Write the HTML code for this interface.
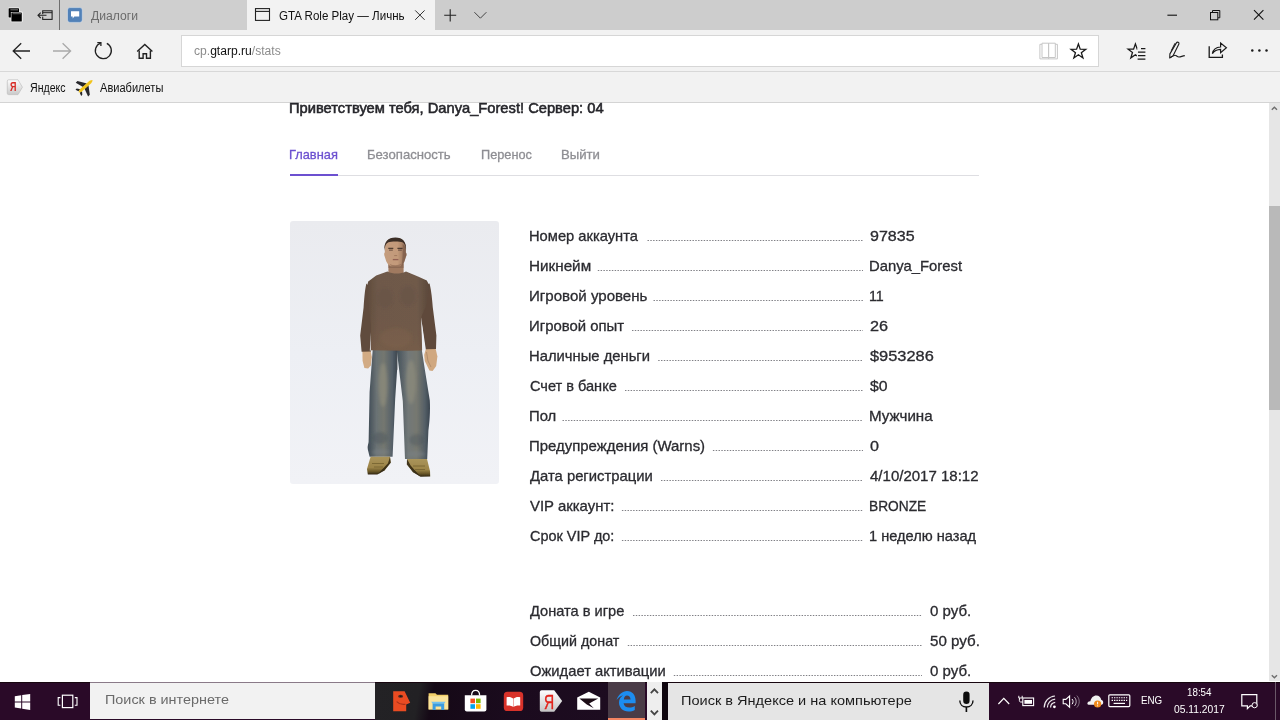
<!DOCTYPE html>
<html lang="ru">
<head>
<meta charset="utf-8">
<title>GTA Role Play — Личный кабинет</title>
<style>
*{box-sizing:border-box;margin:0;padding:0}
html,body{width:1280px;height:720px;overflow:hidden;background:#fff}
body{position:relative;font-family:"Liberation Sans",sans-serif;color:#222}
.abs{position:absolute}
.t{position:absolute;white-space:nowrap;line-height:1;transform-origin:0 0}
svg.ov{position:absolute;left:0;top:0;width:1280px;height:720px;overflow:visible}
/* browser chrome */
#tabbar{left:0;top:0;width:1280px;height:30px;background:#cdcdcd}
#tabsep{left:59px;top:0;width:1px;height:30px;background:#6e6e6e}
#tab1{left:60px;top:0;width:187px;height:30px;background:#cfcfcf}
#tab2{left:247px;top:0;width:188px;height:30px;background:#f2f2f2}
#navbar{left:0;top:30px;width:1280px;height:41px;background:#f2f2f2}
#addr{left:181px;top:35px;width:918px;height:32px;background:#fff;border:1px solid #d6d6d6}
#favbar{left:0;top:71px;width:1280px;height:32px;background:#f2f2f2;border-top:1px solid #d8d8d8;border-bottom:1px solid #d4d4d4}
/* page */
#page{left:0;top:103px;width:1268px;height:579px;background:#fff;overflow:hidden}
#tabsline{left:290px;top:175px;width:689px;height:1px;background:#dedee2}
#tabsact{left:290px;top:174px;width:48px;height:2px;background:#6c50d0}
#skin{left:290px;top:221px;width:209px;height:262.5px;border-radius:3px;background:linear-gradient(180deg,#eaebef 0%,#edeff4 50%,#f1f2f6 100%)}
#scroll{left:1269px;top:103px;width:11px;height:578px;background:#e6e6e6}
#thumb{left:1269px;top:206px;width:11px;height:204px;background:#b9b9b9}
.dots{position:absolute;height:1px;background-image:repeating-linear-gradient(90deg,#88888c 0,#88888c 1.4px,transparent 1.4px,transparent 2.81px)}
/* taskbar */
#taskbar{left:0;top:682px;width:1280px;height:38px;background:#2a0a28;border-top:1px solid #17060f}
#tbmid{left:375px;top:683px;width:233px;height:37px;background:linear-gradient(100deg,#232225 0,#222124 19%,#150916 25%,#1b0b1e 60%,#1d0c20 100%)}
#search1{left:90px;top:682px;width:285px;height:37px;background:#f2f2f2;border-top:1px solid #8a7a88}
#edgebg{left:608px;top:682px;width:37px;height:38px;background:#4a3c47}
#edgeline{left:608px;top:717.5px;width:36.5px;height:2.5px;background:#f48562}
#updn{left:647px;top:682px;width:15px;height:38px;background:#eeeeee}
#gap2{left:662px;top:682px;width:6px;height:38px;background:#0f060f}
#search2{left:668px;top:683px;width:321px;height:37px;background:#e5e5e5}
</style>
</head>
<body>
<div id="tabbar" class="abs"></div>
<div id="tab1" class="abs"></div>
<div id="tabsep" class="abs"></div>
<div id="tab2" class="abs"></div>
<div id="navbar" class="abs"></div>
<div id="addr" class="abs"></div>
<div id="favbar" class="abs"></div>
<div id="page" class="abs"></div>
<div id="tabsline" class="abs"></div>
<div id="tabsact" class="abs"></div>
<div id="skin" class="abs"></div>
<div id="scroll" class="abs"></div>
<div id="thumb" class="abs"></div>
<div id="taskbar" class="abs"></div>
<div id="tbmid" class="abs"></div>
<div id="search1" class="abs"></div>
<div id="edgebg" class="abs"></div>
<div id="edgeline" class="abs"></div>
<div id="updn" class="abs"></div>
<div id="gap2" class="abs"></div>
<div id="search2" class="abs"></div>
<svg class="ov" viewBox="0 0 1280 720" fill="none" stroke-linecap="butt">
<!-- tab preview icon -->
<rect x="8" y="7.6" width="11.6" height="10.6" rx="1" fill="#fff" opacity=".75"/>
<rect x="10.6" y="11.4" width="12" height="10.8" rx="1" fill="#fff" opacity=".75"/>
<rect x="8.6" y="8.2" width="10.4" height="9.4" rx=".6" fill="#000"/>
<rect x="10.4" y="9.3" width="7.6" height="1" fill="#777"/>
<rect x="10.9" y="11.9" width="11.3" height="9.8" rx=".6" fill="#fff"/>
<rect x="11.4" y="12.4" width="10.4" height="9" rx=".5" fill="#000"/>
<rect x="12.6" y="13.2" width="8.4" height="1" fill="#666"/>
<!-- set aside icon -->
<rect x="42.7" y="10.8" width="9.4" height="8.6" stroke="#222" stroke-width="1.1"/>
<line x1="42.7" y1="12.7" x2="52.1" y2="12.7" stroke="#222" stroke-width="1"/>
<rect x="41.5" y="14.2" width="3" height="2.4" fill="#cdcdcd"/>
<path d="M46.5 15.3H38M40.7 12.6L38 15.3L40.7 18" stroke="#222" stroke-width="1.1"/>
<!-- vk icon -->
<rect x="67.5" y="7.6" width="14.8" height="14.8" rx="2.4" fill="#5181b8"/>
<rect x="67.5" y="7.6" width="14.8" height="14.8" rx="2.4" stroke="#dfe6ee" stroke-width=".8" opacity=".7"/>
<path d="M71 11.2h8.2v5.3h-4.9l-1.6 1.9v-1.9H71z" fill="#fff"/>
<!-- active tab page icon -->
<rect x="255.5" y="8.6" width="14" height="11.8" stroke="#222" stroke-width="1.1"/>
<line x1="255.5" y1="11.4" x2="269.5" y2="11.4" stroke="#222" stroke-width="1.1"/>
<!-- tab close -->
<path d="M415.2 10.4l9.4 9.4M424.6 10.4l-9.4 9.4" stroke="#333" stroke-width="1"/>
<!-- new tab plus, chevron -->
<path d="M444.2 15.3h12M450.2 9.2v12.4" stroke="#222" stroke-width="1.1"/>
<path d="M474.4 12.2l6 6 6-6" stroke="#444" stroke-width="1"/>
<!-- window controls -->
<path d="M1167.4 15.2h9.6" stroke="#111" stroke-width="1.1"/>
<path d="M1212.500 12V10.500h7.300v7.300h-1.800" stroke="#111" stroke-width="1"/>
<rect x="1210.500" y="12.500" width="7.300" height="7.300" stroke="#111" stroke-width="1"/>
<path d="M1254 10.2l9.4 9.5M1263.4 10.2l-9.4 9.5" stroke="#111" stroke-width="1.1"/>
<!-- back -->
<path d="M30 51H13.4M21.2 43.2L13.2 51l8 7.8" stroke="#222" stroke-width="1.3"/>
<!-- forward -->
<path d="M53 51h17M62.6 43.2l8 7.8-8 7.8" stroke="#a9a9a9" stroke-width="1.3"/>
<!-- refresh -->
<path d="M100.6 43.1A8 8 0 1 0 106.8 43.4" stroke="#222" stroke-width="1.3"/>
<path d="M97.3 42.6h3.6v3.5" stroke="#222" stroke-width="1.3"/>
<!-- home -->
<path d="M137.2 51.6l7.6-7.2 7.6 7.2" stroke="#222" stroke-width="1.4"/>
<path d="M139.2 50.4v7.9h3.9v-4.6h3.4v4.6h3.9v-7.9" stroke="#222" stroke-width="1.4"/>
<!-- reading view book -->
<path d="M1042 44.300h-2.100v14.600h17.500V44.300h-2.100" stroke="#c6c6c6" stroke-width="1"/>
<path d="M1042 43.200h6.600v14.300H1042zM1048.600 43.200h6.700v14.300h-6.700z" stroke="#c6c6c6" stroke-width="1"/>
<path d="M1048.600 57.500v1.400" stroke="#c6c6c6" stroke-width="1"/>
<!-- star -->
<path d="M1078.40 44.00L1080.21 49.21L1085.72 49.32L1081.33 52.65L1082.93 57.93L1078.40 54.78L1073.87 57.93L1075.47 52.65L1071.08 49.32L1076.59 49.21z" stroke="#1a1a1a" stroke-width="1.300" stroke-linejoin="miter"/>
<!-- hub: star + lines -->
<path d="M1135.40 43.90L1137.21 49.11L1142.72 49.22L1138.33 52.55L1139.93 57.83L1135.40 54.68L1130.87 57.83L1132.47 52.55L1128.08 49.22L1133.59 49.11z" stroke="#1a1a1a" stroke-width="1.300" stroke-linejoin="miter"/>
<path d="M1137.400 47.700h9v12.800h-9.800z" fill="#f2f2f2"/>
<path d="M1141 48.700h4.400M1138 52.200h7.400M1138 55.700h7.400M1137.600 59.100h7.800" stroke="#1a1a1a" stroke-width="1.200"/>
<!-- pen / notes -->
<path d="M1176.400 42.900c.9-1.500 3.100-.5 2.500 1.200l-5.700 11.500-3.500 2.400.2-4.100z" stroke="#1a1a1a" stroke-width="1.100" stroke-linejoin="round"/>
<path d="M1175 43.200l-3.700 7.400" stroke="#1a1a1a" stroke-width="1"/>
<path d="M1170.400 57.600c2.400-1.600 3.600-2.600 4.800-2.400 1.400.2 1.800 1.800 3.800 1.800 1.800 0 3.200-1 5.800-1.400" stroke="#1a1a1a" stroke-width="1.100"/>
<!-- share -->
<path d="M1209.200 46.200v11.100h13.200v-2.800" stroke="#1a1a1a" stroke-width="1.300"/>
<path d="M1212.400 53.600c.8-4.400 3.600-6.400 8.200-6.600v-4l5.800 4.800-5.800 4.800v-3.200c-3.800.2-6.200 1.400-8.200 4.200z" stroke="#1a1a1a" stroke-width="1.200" stroke-linejoin="miter"/>
<!-- more dots -->
<circle cx="1252.300" cy="50.500" r="1.250" fill="#1a1a1a"/><circle cx="1259.400" cy="50.500" r="1.250" fill="#1a1a1a"/><circle cx="1266.500" cy="50.500" r="1.250" fill="#1a1a1a"/>
<!-- fav: yandex -->
<defs><linearGradient id="yg" x1="0" y1="0" x2="0" y2="1"><stop offset="0" stop-color="#fdfdfd"/><stop offset="1" stop-color="#c9c9c9"/></linearGradient>
<linearGradient id="yr" x1="0" y1="0" x2="0" y2="1"><stop offset="0" stop-color="#ee6a5e"/><stop offset="1" stop-color="#d01c1c"/></linearGradient></defs>
<path d="M8.600 79.800h9.400l4.400 7.400-4.400 7.400H8.600a1.300 1.300 0 0 1-1.300-1.300V81.100a1.300 1.300 0 0 1 1.300-1.300z" fill="url(#yg)" stroke="#bdbdbd" stroke-width=".7"/>
<!-- fav: plane -->
<g transform="translate(85.5 86.3) rotate(48) scale(1.05)">
<path d="M1.1-2.800L8.800 2.400v2.200L1.100 2.200zM-1.100-2.800L-8.800 2.400v2.200L-1.100 2.200z" fill="#26262a"/>
<path d="M1 5.400l3 2.300v1.500l-3-1zM-1 5.400l-3 2.300v1.500l3-1z" fill="#26262a"/>
<path d="M0-9c1.200 1.200 1.400 2.600 1.400 4v11.600L0 8.800l-1.400-2.200V-5c0-1.400.2-2.800 1.400-4z" fill="#f2c41c"/>
</g>
<!-- scrollbar arrows -->
<path d="M1271.800 109.800l2.600-2.600 2.600 2.600" stroke="#6e6e6e" stroke-width="1.400"/>
<path d="M1271.800 675.200l2.600 2.600 2.600-2.600" stroke="#6e6e6e" stroke-width="1.400"/>
</svg>
<div class="t" style="left:10.4px;top:81.2px;font-size:12.5px;font-weight:700;color:#d82a24;transform:scaleX(.72)">Я</div>

<svg class="ov" viewBox="0 0 1280 720">
<defs>
<filter id="cb" x="-5%" y="-5%" width="110%" height="110%"><feGaussianBlur stdDeviation="0.55"/></filter>
<filter id="cb2" x="-20%" y="-20%" width="140%" height="140%"><feGaussianBlur stdDeviation="1.6"/></filter>
<linearGradient id="sw" x1="0" y1="0" x2="1" y2="0"><stop offset="0" stop-color="#5f4b3c"/><stop offset=".18" stop-color="#6e5949"/><stop offset=".8" stop-color="#6f5a4a"/><stop offset="1" stop-color="#5a4739"/></linearGradient>
<linearGradient id="swv" x1="0" y1="0" x2="0" y2="1"><stop offset="0" stop-color="#6a5445" stop-opacity="0"/><stop offset="1" stop-color="#7a5e48" stop-opacity=".55"/></linearGradient>
<linearGradient id="jl" x1="0" y1="0" x2="1" y2="0"><stop offset="0" stop-color="#3e4a54"/><stop offset=".3" stop-color="#6a7274"/><stop offset=".55" stop-color="#74776f"/><stop offset=".82" stop-color="#57616a"/><stop offset="1" stop-color="#3b4650"/></linearGradient>
<linearGradient id="jr" x1="0" y1="0" x2="1" y2="0"><stop offset="0" stop-color="#43505a"/><stop offset=".35" stop-color="#727878"/><stop offset=".6" stop-color="#767870"/><stop offset=".85" stop-color="#545e66"/><stop offset="1" stop-color="#39444e"/></linearGradient>
<linearGradient id="sk" x1="0" y1="0" x2="1" y2="0"><stop offset="0" stop-color="#c49c7c"/><stop offset=".6" stop-color="#c39a7a"/><stop offset="1" stop-color="#8f6c55"/></linearGradient>
<linearGradient id="sh" x1="0" y1="0" x2="0" y2="1"><stop offset="0" stop-color="#aa945a"/><stop offset=".6" stop-color="#9c8448"/><stop offset=".82" stop-color="#6a5828"/><stop offset="1" stop-color="#2e2410"/></linearGradient>
</defs>
<g filter="url(#cb)">
<!-- neck -->
<path d="M388.400 258h15.200v17h-15.200z" fill="#a07a60"/>
<path d="M388.400 264h15.200v4h-15.200z" fill="#7e5e4a" opacity=".6"/>
<!-- head -->
<path d="M384.800 247c0-6 4.200-9 10.600-9s10.400 3 10.400 9v5.500c.8.200 1 2.800.1 4l-.8 2.500c-.6 3.200-3 6.200-5 7.300h-9.600c-2.400-1.300-4.400-4.300-5-7.300l-.8-2.500c-.9-1.600-.5-3.800.1-4z" fill="url(#sk)"/>
<path d="M402.600 244c2 1 3.200 3 3.200 6v3c.8.200 1 2.800.1 4l-.8 2.500c-.5 2.600-2 5-3.700 6.400 1-5 1.600-14 1.200-21.900z" fill="#7c5b48" opacity=".7"/>
<!-- hair -->
<path d="M384.400 251c-.8-9 3.800-13.400 11-13.400s11.400 4.400 10.600 13.400c-.3-5.600-1.800-8-3.600-8.800-2.200-.9-11.800-.9-14 0-2 .8-3.600 3.200-4 8.800z" fill="#3a2d26"/>
<!-- face details -->
<path d="M388.300 248.300h5M397.400 248.300h5.200" stroke="#3f2f27" stroke-width="1.200" opacity=".85"/>
<path d="M389 250.200h3.800M398 250.200h3.800" stroke="#5a4034" stroke-width="1.200" opacity=".7"/>
<path d="M392.800 259.600h5.600" stroke="#8a584c" stroke-width="1.300" opacity=".85"/>
<path d="M394.200 255.600h3" stroke="#9a7258" stroke-width="1" opacity=".8"/>
<path d="M390 264.600c2 1.600 9 1.600 11.200 0" stroke="#8e6a54" stroke-width="1.200" fill="none" opacity=".7"/>
<!-- jeans -->
<path d="M372.800 348.500h24.400v20l-2 30-2.600 58.200h-23l-1.800-7.400c-.6-3 .6-5.200.8-7.200l1-50z" fill="url(#jl)"/>
<path d="M396.600 348.500h25l3.400 22 4.800 30c.6 10-.2 22-1.400 30l-1.200 28.400h-22.200l-2.200-58z" fill="url(#jr)"/>
<path d="M396.800 352v18" stroke="#4a5054" stroke-width="1.200" opacity=".7"/>
<!-- shoes -->
<path d="M370.600 456.800h19.400l.6 5.800-6 7.600-7.400 4.400h-9.400l-.8-5.600z" fill="url(#sh)"/>
<path d="M390 456.800l.8 6-6.400 7.600-7 4.200 10.600-11.400z" fill="#2e2410" opacity=".85"/>
<path d="M407.200 459h19.800l3 12 .2 5.600-9.600.2-7.600-4.800-6-8z" fill="url(#sh)"/>
<path d="M407 459l-.2 5.400 6.200 7.800 7.400 4.400-9.800-11z" fill="#2e2410" opacity=".85"/>
<path d="M372 463.500h12M374 467h9M413 466h12M415 469.500h10" stroke="#6e5c2c" stroke-width=".9" opacity=".8"/>
<!-- hands -->
<path d="M362.400 351h8.200l1.200 6-1 8.600-2.600 2.800-3.800-.4-1.800-7z" fill="#d2ab84"/>
<path d="M426 348.500h9.600l1.800 8-1.200 9.600-3.600 5-3.200-.6-4.600-9.500-.6-6z" fill="#d0a880"/>
<path d="M426.500 352l1.500 9 3 6" stroke="#a58262" stroke-width="1" fill="none" opacity=".7"/>
<!-- sweater arms -->
<path d="M366.400 283.600c-1.600 6-2.200 16-2.800 24l-3.400 28 1.400 16.200 9.400-.2 1.600-24 6-30z" fill="#604b3c"/>
<path d="M429.600 283.600c1.800 7 2.600 17 3.200 24l3.600 28-.4 13.400-10.200.2-4.600-31-6-30z" fill="#5f4a3b"/>
<!-- sweater torso -->
<path d="M387.400 271.400c3 1.600 6 2 9.200 2s6.400-.4 9.400-2l12 5 8.800 4 3 6-4 20-4.800 11 1.200 32.800-15.200.6-36.200-.8.400-22-4.600-40 1.600-6.400 8-6z" fill="url(#sw)"/>
<path d="M371 300h51v50.500h-51z" fill="url(#swv)"/>
<path d="M421.400 320l3.600 29.600-2.400.4z" fill="#edeff4"/>
<path d="M370.800 332l.2 18.500-1.200.2z" fill="#edeff4" opacity=".8"/>
<g filter="url(#cb2)">
<ellipse cx="385" cy="298" rx="8" ry="10" fill="#58443a" opacity=".2"/>
<ellipse cx="408" cy="296" rx="8" ry="10" fill="#58443a" opacity=".2"/>
<ellipse cx="396" cy="338" rx="16" ry="10" fill="#80644e" opacity=".35"/>
<ellipse cx="383" cy="385" rx="4.500" ry="22" fill="#97947f" opacity=".55"/>
<ellipse cx="411" cy="382" rx="5" ry="22" fill="#97947f" opacity=".5"/>
<ellipse cx="380" cy="438" rx="8" ry="6" fill="#4a545c" opacity=".45"/>
<ellipse cx="417" cy="440" rx="8" ry="6" fill="#4a545c" opacity=".4"/>
<ellipse cx="381" cy="452" rx="9" ry="3" fill="#7a8288" opacity=".5"/>
<ellipse cx="416" cy="454" rx="9" ry="3" fill="#7a8288" opacity=".5"/>
</g>
</g>
</svg>

<svg class="ov" viewBox="0 0 1280 720" fill="none">
<defs>
<filter id="tb" x="-10%" y="-10%" width="120%" height="120%"><feGaussianBlur stdDeviation="0.35"/></filter>
<linearGradient id="yg2" x1="0" y1="0" x2="0" y2="1"><stop offset="0" stop-color="#ffffff"/><stop offset="1" stop-color="#c4c4c4"/></linearGradient>
</defs>
<g filter="url(#tb)">
<!-- windows logo -->
<path d="M14.800 696.200l6.400-.9v6.100h-6.400zM22.200 695.100l8-1.200v7.500h-8zM14.800 702.400h6.400v6.100l-6.400-.9zM22.200 702.400h8v7.500l-8-1.200z" fill="#fff"/>
<!-- task view -->
<rect x="62.400" y="695.200" width="10.400" height="12.400" stroke="#fff" stroke-width="1.200"/>
<path d="M60.400 697.600h-2.200v7.600h2.200M74.800 697.600h2.200v7.600h-2.200" stroke="#fff" stroke-width="1.100"/>
<!-- orange face -->
<path d="M393.200 691.200h11.400l5.600 11.600-4 1.600v6.800h-13z" fill="#ea4c24"/>
<ellipse cx="400.600" cy="696.200" rx="2.500" ry="1.500" fill="#4a2a22"/>
<circle cx="400.800" cy="696.200" r=".7" fill="#1a0a08"/>
<path d="M396.600 701.600c2.400 2.400 5.400 3.200 9 2.600" stroke="#a8321a" stroke-width="1.100"/>
<!-- folder -->
<path d="M428.600 693.200h6.800l1.600 1.600h11.200v14.600h-19.600z" fill="#f3cf6a"/>
<path d="M428.600 696.200h19.600v13.200h-19.600z" fill="#fbe39a"/>
<path d="M432.600 703.200h11.600v6.800h-3v-3.400h-5.600v3.400h-3z" fill="#3a9be0"/>
<path d="M431.200 701.800h14.400l-1.400 1.800h-11.600z" fill="#6fc0f2"/>
<!-- store -->
<path d="M471.600 695.400c0-3 1.600-5 4-5s4 2 4 5" stroke="#fff" stroke-width="1.300"/>
<path d="M464.800 695.200h21.600v14.200a2 2 0 0 1-2 2h-17.600a2 2 0 0 1-2-2z" fill="#fff"/>
<rect x="470.400" y="698.600" width="4.600" height="4.600" fill="#f25022"/><rect x="476" y="698.600" width="4.600" height="4.600" fill="#7fba00"/><rect x="470.400" y="704.200" width="4.600" height="4.600" fill="#00a4ef"/><rect x="476" y="704.200" width="4.600" height="4.600" fill="#ffb900"/>
<!-- red book -->
<rect x="503.800" y="691.800" width="19.400" height="19.200" rx="3.600" fill="#d8302a"/>
<path d="M506.600 697.200c2.600-.6 4.800-.2 6.600 1.400v8.400c-1.800-1.400-4-1.800-6.600-1.400zM520.200 697.200c-2.600-.6-4.800-.2-6.600 1.400v8.400c1.800-1.400 4-1.800 6.600-1.400z" fill="#fff"/>
<!-- yandex browser -->
<path d="M541.600 690.200h12.600l8 10.800-8 10.800h-12.600a1.800 1.800 0 0 1-1.800-1.800v-18a1.800 1.800 0 0 1 1.800-1.800z" fill="url(#yg2)"/>
<!-- mail -->
<path d="M577.200 697.400l11.600-5.600 11.400 5.600v12.400h-23z" fill="#fff"/>
<path d="M579.400 698.400h18.800l-9 5.200 4.600 4.600-7-3.600z" fill="#1a0a18"/>
<!-- edge e -->
<path fill-rule="evenodd" d="M616.500 700C618.500 694.500 622.500 691 627 691C632.600 691 635.600 695.400 635.600 700.600L635.600 703.200L623.600 703.200C623.800 706 626.200 707.600 629.200 707.600C631.200 707.600 633.200 707 634.800 706L634.800 710C633 711 630.800 711.500 628.400 711.500C622.800 711.500 619 707.800 619 702.600C619 699.400 620.600 696.800 623 695.200C620.400 696 618.200 697.600 616.500 700ZM623.800 699.400L630.600 699.400C630.400 697 629 695.400 627 695.400C625.200 695.400 624.200 697 623.800 699.400Z" fill="#1d8df0"/>
<!-- up / down chevrons -->
<path d="M650.800 693.200l3.600-3.800 3.600 3.800" stroke="#444" stroke-width="1.800"/>
<path d="M650.800 710.600l3.600 3.800 3.600-3.800" stroke="#444" stroke-width="1.800"/>
<!-- mic -->
<rect x="963.200" y="691.600" width="6.400" height="12.400" rx="3.200" fill="#111"/>
<path d="M959.800 700.400c0 4 2.800 6.600 6.600 6.600s6.600-2.600 6.600-6.600" stroke="#111" stroke-width="1.400"/>
<path d="M966.400 707v5" stroke="#111" stroke-width="1.600"/>
<!-- tray chevron -->
<path d="M998.400 704l5.400-5.600 5.400 5.600" stroke="#fff" stroke-width="1.200"/>
<!-- battery w/ plug -->
<rect x="1022.800" y="698" width="10.800" height="7.600" stroke="#fff" stroke-width="1.100"/>
<rect x="1024.400" y="700" width="7.600" height="3.800" fill="#fff"/>
<path d="M1018.800 695.800v2.200h3.400v-2.200M1019.400 698v2.600c0 1 .6 1.400 1.400 1.400h2" stroke="#fff" stroke-width="1"/>
<!-- wifi -->
<path d="M1044.200 707.600c0-6 4.600-11.200 10.800-11.600" stroke="#fff" stroke-width="1.200" opacity=".9"/>
<path d="M1047.400 707.600c0-4.400 3.200-8 7.800-8.400" stroke="#fff" stroke-width="1.200" opacity=".9"/>
<path d="M1050.600 707.600c0-2.600 1.800-4.800 4.600-5.200" stroke="#fff" stroke-width="1.200" opacity=".9"/>
<circle cx="1054.400" cy="706.800" r="1.400" fill="#fff"/>
<!-- volume -->
<path d="M1063.200 699.400h2.600l3.800-3.400v11.200l-3.800-3.400h-2.600z" stroke="#fff" stroke-width="1.100"/>
<path d="M1072 699c1.400 1.400 1.400 3.800 0 5.200" stroke="#fff" stroke-width="1"/>
<path d="M1074.400 697.200c2.400 2.400 2.400 6.400 0 8.800" stroke="#fff" stroke-width="1" opacity=".7"/>
<path d="M1076.800 695.600c3.200 3.200 3.200 8.800 0 12" stroke="#fff" stroke-width="1" opacity=".4"/>
<!-- cloud/hat with warning -->
<path d="M1087.400 703.200c.2-1.400 1.600-2.200 3-2 .6-3.400 3-5.800 6-5.800 2.600 0 4.400 1.800 4.800 4.400 1.400.4 2 1.400 2 2.600 0 1.400-1 2.400-2.600 2.400h-11c-1.400 0-2.400-.6-2.200-1.600z" fill="#f2f2f2"/>
<circle cx="1097.600" cy="704" r="3.600" fill="#f08a1c"/>
<path d="M1097.600 701.800v2.600M1097.600 705.400v.9" stroke="#fff" stroke-width="1"/>
<!-- keyboard -->
<rect x="1108.800" y="694.800" width="21" height="11.800" rx="1" stroke="#fff" stroke-width="1.200"/>
<path d="M1111.600 697.800h15.600M1111.600 700.400h15.600" stroke="#fff" stroke-width="1.100" stroke-dasharray="1.400 1"/>
<path d="M1113.600 703.400h11.400" stroke="#fff" stroke-width="1.200"/>
<!-- action center -->
<path d="M1241.800 694.600h15v11.200h-6.600l-2.800 2.800v-2.800h-5.600z" stroke="#fff" stroke-width="1.200"/>
<circle cx="1254.600" cy="705.200" r="2.600" fill="#2a0a28" stroke="#fff" stroke-width="1"/>
<!-- show desktop sep -->
<path d="M1275.500 682v38" stroke="#6a5868" stroke-width="1"/>
</g>
</svg>
<div class="t" style="left:544px;top:692.1px;font-size:20px;font-weight:400;color:#e2231a;-webkit-text-stroke:.4px #e2231a;transform:scaleX(.7)">Я</div>

<div class="t" style="left:91.00px;top:9.54px;font-size:12px;color:#6b6b6b;transform:scaleX(1.0111)">Диалоги</div>
<div class="t" style="left:279.00px;top:9.54px;font-size:12px;color:#111;transform:scaleX(0.9648)">GTA Role Play — Личнь</div>
<div class="t" style="left:194.30px;top:44.74px;font-size:12px;color:#111;transform:scaleX(1.0077)"><span style="color:#8c8c8c">cp.</span><span style="color:#111">gtarp.ru</span><span style="color:#8c8c8c">/stats</span></div>
<div class="t" style="left:30.20px;top:81.64px;font-size:12px;color:#111;transform:scaleX(0.8822)">Яндекс</div>
<div class="t" style="left:100.10px;top:81.64px;font-size:12px;color:#111;transform:scaleX(0.9221)">Авиабилеты</div>
<div class="t" style="left:289.49px;top:101.23px;font-size:14.5px;color:#26262b;-webkit-text-stroke:.55px #26262b;transform:scaleX(1.0132)">Приветствуем тебя, Danya_Forest! Сервер: 04</div>
<div class="t" style="left:289.11px;top:147.90px;font-size:13px;color:#6c50d0;-webkit-text-stroke:.3px #6c50d0;transform:scaleX(0.9868)">Главная</div>
<div class="t" style="left:367.39px;top:147.90px;font-size:13px;color:#8e8e93;-webkit-text-stroke:.3px #8e8e93;transform:scaleX(1.0091)">Безопасность</div>
<div class="t" style="left:480.92px;top:147.90px;font-size:13px;color:#8e8e93;-webkit-text-stroke:.3px #8e8e93;transform:scaleX(0.9797)">Перенос</div>
<div class="t" style="left:561.29px;top:147.90px;font-size:13px;color:#8e8e93;-webkit-text-stroke:.3px #8e8e93;transform:scaleX(1.0126)">Выйти</div>
<div class="t" style="left:104.53px;top:693.37px;font-size:13.5px;color:#6a6a6a;transform:scaleX(1.0665)">Поиск в интернете</div>
<div class="t" style="left:680.72px;top:693.77px;font-size:13.5px;color:#1c1c1c;transform:scaleX(1.0770)">Поиск в Яндексе и на компьютере</div>
<div class="t" style="left:1140.60px;top:695.02px;font-size:11.5px;color:#fff;transform:scaleX(0.8528)">ENG</div>
<div class="t" style="left:1186.90px;top:686.87px;font-size:11.5px;color:#fff;transform:scaleX(0.8509)">18:54</div>
<div class="t" style="left:1174.00px;top:703.77px;font-size:11.5px;color:#fff;transform:scaleX(0.8951)">05.11.2017</div>
<div class="t" style="left:528.69px;top:228.53px;font-size:14.5px;color:#2b2b30;-webkit-text-stroke:.3px #2b2b30;transform:scaleX(1.0133)">Номер аккаунта</div>
<div class="t" style="left:870.00px;top:228.53px;font-size:14.5px;color:#2b2b30;-webkit-text-stroke:.3px #2b2b30;transform:scaleX(1.1054)">97835</div>
<div class="t" style="left:528.65px;top:258.63px;font-size:14.5px;color:#2b2b30;-webkit-text-stroke:.3px #2b2b30;transform:scaleX(1.0519)">Никнейм</div>
<div class="t" style="left:868.98px;top:258.63px;font-size:14.5px;color:#2b2b30;-webkit-text-stroke:.3px #2b2b30;transform:scaleX(1.0217)">Danya_Forest</div>
<div class="t" style="left:528.66px;top:288.73px;font-size:14.5px;color:#2b2b30;-webkit-text-stroke:.3px #2b2b30;transform:scaleX(1.0392)">Игровой уровень</div>
<div class="t" style="left:869.02px;top:288.73px;font-size:14.5px;color:#2b2b30;-webkit-text-stroke:.3px #2b2b30;transform:scaleX(0.9830)">11</div>
<div class="t" style="left:528.67px;top:318.73px;font-size:14.5px;color:#2b2b30;-webkit-text-stroke:.3px #2b2b30;transform:scaleX(1.0282)">Игровой опыт</div>
<div class="t" style="left:870.00px;top:318.73px;font-size:14.5px;color:#2b2b30;-webkit-text-stroke:.3px #2b2b30;transform:scaleX(1.1205)">26</div>
<div class="t" style="left:528.68px;top:348.73px;font-size:14.5px;color:#2b2b30;-webkit-text-stroke:.3px #2b2b30;transform:scaleX(1.0200)">Наличные деньги</div>
<div class="t" style="left:870.00px;top:348.73px;font-size:14.5px;color:#2b2b30;-webkit-text-stroke:.3px #2b2b30;transform:scaleX(1.1306)">$953286</div>
<div class="t" style="left:529.70px;top:378.73px;font-size:14.5px;color:#2b2b30;-webkit-text-stroke:.3px #2b2b30;transform:scaleX(1.0035)">Счет в банке</div>
<div class="t" style="left:870.00px;top:378.73px;font-size:14.5px;color:#2b2b30;-webkit-text-stroke:.3px #2b2b30;transform:scaleX(1.0894)">$0</div>
<div class="t" style="left:528.67px;top:408.73px;font-size:14.5px;color:#2b2b30;-webkit-text-stroke:.3px #2b2b30;transform:scaleX(1.0251)">Пол</div>
<div class="t" style="left:868.95px;top:408.73px;font-size:14.5px;color:#2b2b30;-webkit-text-stroke:.3px #2b2b30;transform:scaleX(1.0451)">Мужчина</div>
<div class="t" style="left:528.67px;top:438.73px;font-size:14.5px;color:#2b2b30;-webkit-text-stroke:.3px #2b2b30;transform:scaleX(1.0298)">Предупреждения (Warns)</div>
<div class="t" style="left:870.00px;top:438.73px;font-size:14.5px;color:#2b2b30;-webkit-text-stroke:.3px #2b2b30;transform:scaleX(1.1125)">0</div>
<div class="t" style="left:529.70px;top:468.73px;font-size:14.5px;color:#2b2b30;-webkit-text-stroke:.3px #2b2b30;transform:scaleX(1.0210)">Дата регистрации</div>
<div class="t" style="left:870.00px;top:468.73px;font-size:14.5px;color:#2b2b30;-webkit-text-stroke:.3px #2b2b30;transform:scaleX(1.0357)">4/10/2017 18:12</div>
<div class="t" style="left:529.70px;top:498.73px;font-size:14.5px;color:#2b2b30;-webkit-text-stroke:.3px #2b2b30;transform:scaleX(1.0287)">VIP аккаунт:</div>
<div class="t" style="left:869.05px;top:498.73px;font-size:14.5px;color:#2b2b30;-webkit-text-stroke:.3px #2b2b30;transform:scaleX(0.9473)">BRONZE</div>
<div class="t" style="left:529.70px;top:528.73px;font-size:14.5px;color:#2b2b30;-webkit-text-stroke:.3px #2b2b30;transform:scaleX(0.9965)">Срок VIP до:</div>
<div class="t" style="left:868.99px;top:528.73px;font-size:14.5px;color:#2b2b30;-webkit-text-stroke:.3px #2b2b30;transform:scaleX(1.0068)">1 неделю назад</div>
<div class="t" style="left:529.70px;top:603.53px;font-size:14.5px;color:#2b2b30;-webkit-text-stroke:.3px #2b2b30;transform:scaleX(1.0080)">Доната в игре</div>
<div class="t" style="left:929.70px;top:603.53px;font-size:14.5px;color:#2b2b30;-webkit-text-stroke:.3px #2b2b30;transform:scaleX(1.0384)">0 руб.</div>
<div class="t" style="left:529.70px;top:633.63px;font-size:14.5px;color:#2b2b30;-webkit-text-stroke:.3px #2b2b30;transform:scaleX(0.9855)">Общий донат</div>
<div class="t" style="left:929.70px;top:633.63px;font-size:14.5px;color:#2b2b30;-webkit-text-stroke:.3px #2b2b30;transform:scaleX(1.0433)">50 руб.</div>
<div class="t" style="left:529.70px;top:663.53px;font-size:14.5px;color:#2b2b30;-webkit-text-stroke:.3px #2b2b30;transform:scaleX(1.0182)">Ожидает активации</div>
<div class="t" style="left:929.70px;top:663.53px;font-size:14.5px;color:#2b2b30;-webkit-text-stroke:.3px #2b2b30;transform:scaleX(1.0384)">0 руб.</div>
<svg class="ov" viewBox="0 0 1280 720"><g stroke="#808086" stroke-width="1" stroke-dasharray="1.45 1.36" fill="none"><path d="M647.5 240.5H863"/><path d="M597.8 270.5H863"/><path d="M653.5 300.5H863"/><path d="M632.0 330.5H863"/><path d="M658.2 360.5H863"/><path d="M625.0 390.5H863"/><path d="M562.5 420.5H863"/><path d="M712.9 450.5H863"/><path d="M661.0 480.5H863"/><path d="M621.9 510.5H863"/><path d="M621.9 540.5H863"/><path d="M633.0 615.5H922"/><path d="M627.8 645.5H922"/><path d="M673.8 675.5H922"/></g></svg>
</body>
</html>
